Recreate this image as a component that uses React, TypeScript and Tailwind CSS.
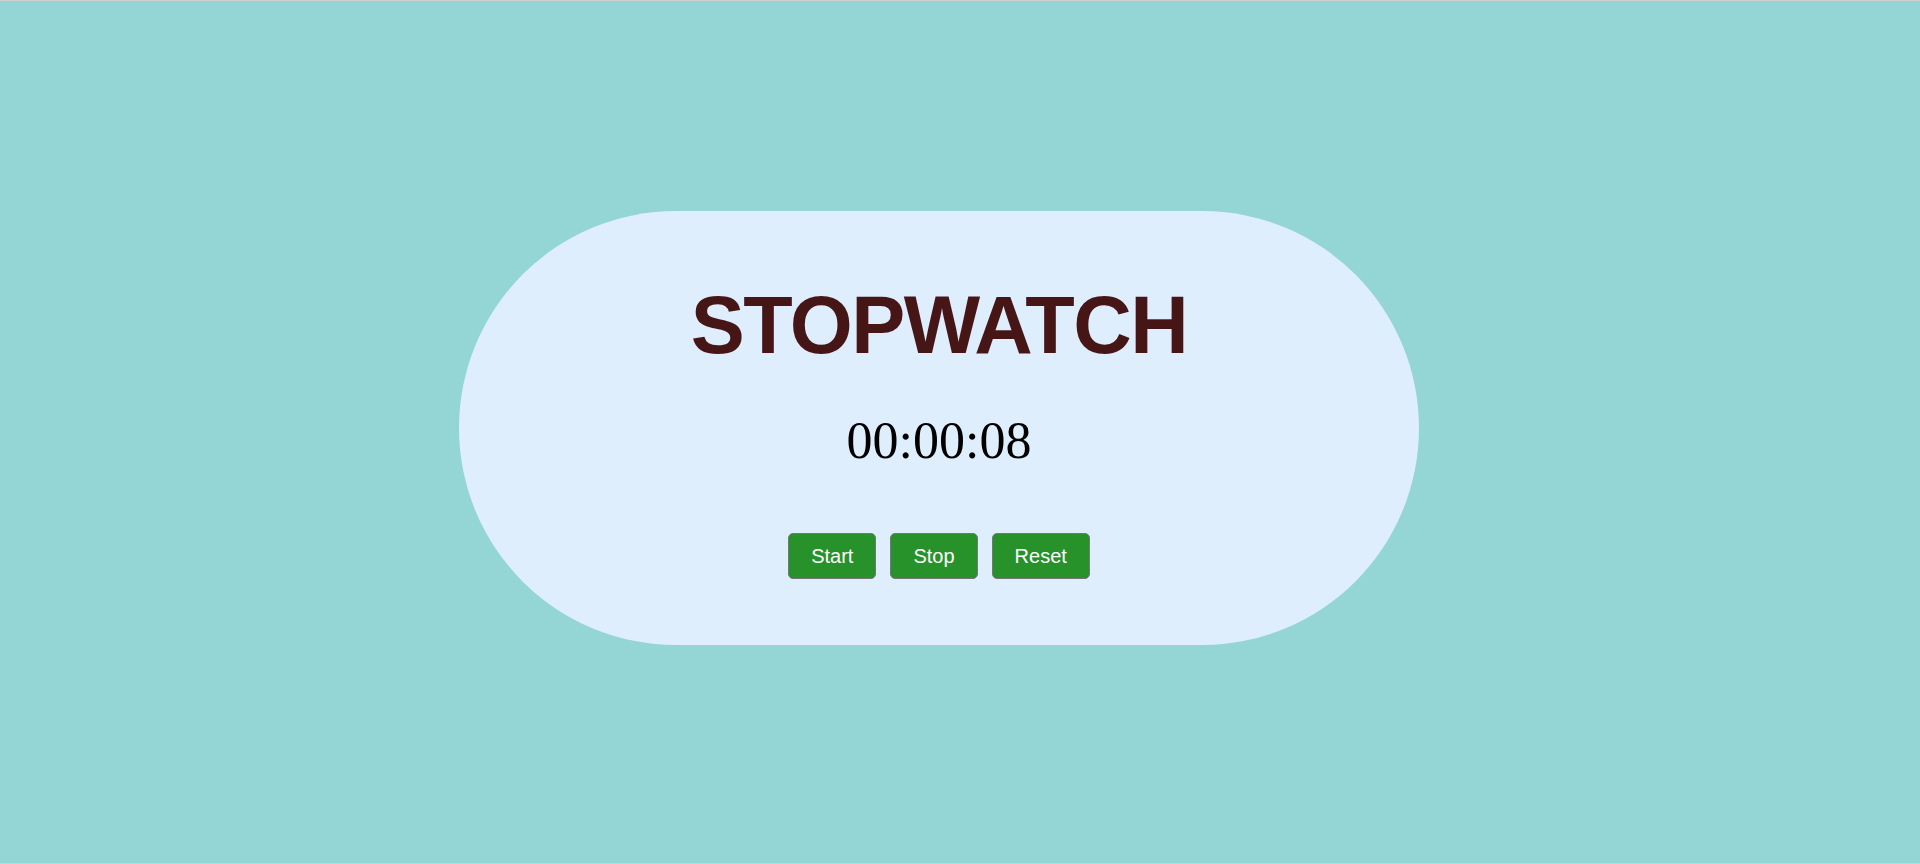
import { useEffect, useState } from "react";

function pad(n: number) {
  return n.toString().padStart(2, "0");
}

export default function App() {
  const [seconds, setSeconds] = useState(8);
  const [running, setRunning] = useState(false);

  useEffect(() => {
    if (!running) return;
    const id = setInterval(() => setSeconds((s) => s + 1), 1000);
    return () => clearInterval(id);
  }, [running]);

  const h = Math.floor(seconds / 3600);
  const m = Math.floor((seconds % 3600) / 60);
  const s = seconds % 60;

  const buttons = [
    { label: "Start", onClick: () => setRunning(true) },
    { label: "Stop", onClick: () => setRunning(false) },
    {
      label: "Reset",
      onClick: () => {
        setRunning(false);
        setSeconds(0);
      },
    },
  ];

  return (
    <div className="flex h-[864px] items-center justify-center border-y border-[#cfcfcf] bg-[#93d6d5] pb-[8px] pr-[42px]">
      {/* Card */}
      <div className="flex h-[434px] w-[960px] flex-col items-center rounded-full bg-[#dfeefd] pt-[68px]">
        <h1 className="font-['Liberation_Sans',Arial,sans-serif] text-[81px] font-bold leading-[92px] tracking-[-1.5px] text-[#461617]">
          STOPWATCH
        </h1>

        <div className="mt-[40px] font-['Liberation_Serif','Times_New_Roman',serif] text-[52px] leading-[60px] text-black">
          {pad(h)}:{pad(m)}:{pad(s)}
        </div>

        <div className="mt-[62px] flex gap-[14px]">
          {buttons.map((b) => (
            <button
              key={b.label}
              onClick={b.onClick}
              className="flex h-[46px] items-center rounded-[5px] border border-[#767676] bg-[#28922a] px-[22px] font-['Liberation_Sans',Arial,sans-serif] text-[20px] text-white"
            >
              {b.label}
            </button>
          ))}
        </div>
      </div>
    </div>
  );
}
